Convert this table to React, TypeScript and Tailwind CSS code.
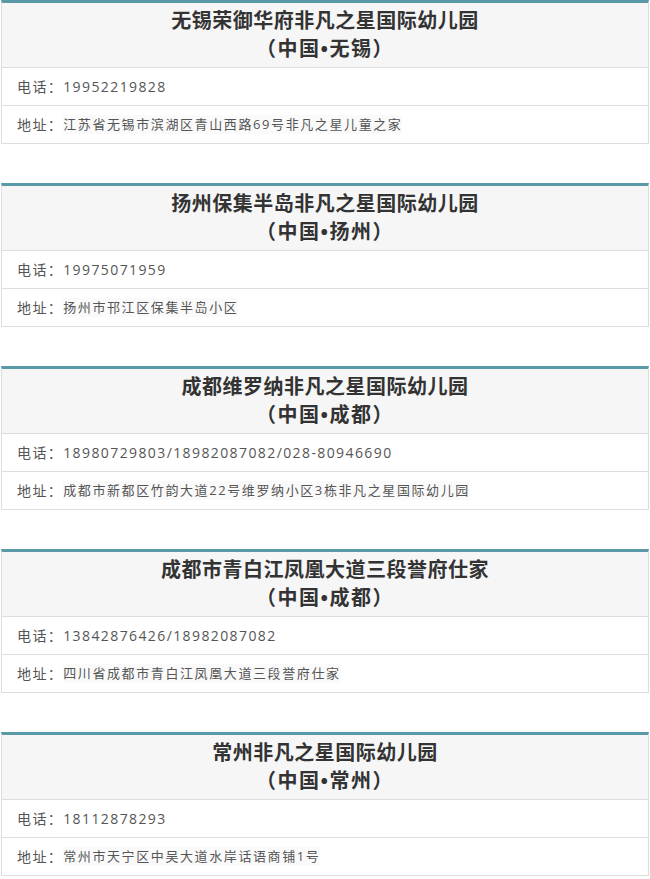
const schools = [
  {
    name: "无锡荣御华府非凡之星国际幼儿园",
    city: "（中国•无锡）",
    phone: "19952219828",
    address: "江苏省无锡市滨湖区青山西路69号非凡之星儿童之家",
  },
  {
    name: "扬州保集半岛非凡之星国际幼儿园",
    city: "（中国•扬州）",
    phone: "19975071959",
    address: "扬州市邗江区保集半岛小区",
  },
  {
    name: "成都维罗纳非凡之星国际幼儿园",
    city: "（中国•成都）",
    phone: "18980729803/18982087082/028-80946690",
    address: "成都市新都区竹韵大道22号维罗纳小区3栋非凡之星国际幼儿园",
  },
  {
    name: "成都市青白江凤凰大道三段誉府仕家",
    city: "（中国•成都）",
    phone: "13842876426/18982087082",
    address: "四川省成都市青白江凤凰大道三段誉府仕家",
  },
  {
    name: "常州非凡之星国际幼儿园",
    city: "（中国•常州）",
    phone: "18112878293",
    address: "常州市天宁区中吴大道水岸话语商铺1号",
  },
]

export default function App() {
  return (
    <div className="w-[650px] bg-white px-px font-['Open_Sans','Noto_Sans_CJK_SC',sans-serif] [text-spacing-trim:space-all]">
      {schools.map((s) => (
        <div key={s.name} className="mb-[39px] border border-[#dddddd] border-t-[3px] border-t-[#5a9aa8]">
          <div className="bg-[#f6f6f6] py-[4px] text-center text-[20px] font-bold leading-[28px] tracking-[0.5px] text-[#333]">
            <div>{s.name}</div>
            <div className="tracking-[1.5px]">{s.city}</div>
          </div>
          <div className="flex h-[38px] items-center border-t border-[#dddddd] px-[15px] text-[14px] tracking-[1.4px] text-[#555]">
            电话：{s.phone}
          </div>
          <div className="flex h-[38px] items-center border-t border-[#dddddd] px-[15px] text-[14px] tracking-[1.4px] text-[#555]">
            地址：<span className="bg-[#fafafa] text-[13px] tracking-[1.6px] text-[#555]">{s.address}</span>
          </div>
        </div>
      ))}
    </div>
  )
}
